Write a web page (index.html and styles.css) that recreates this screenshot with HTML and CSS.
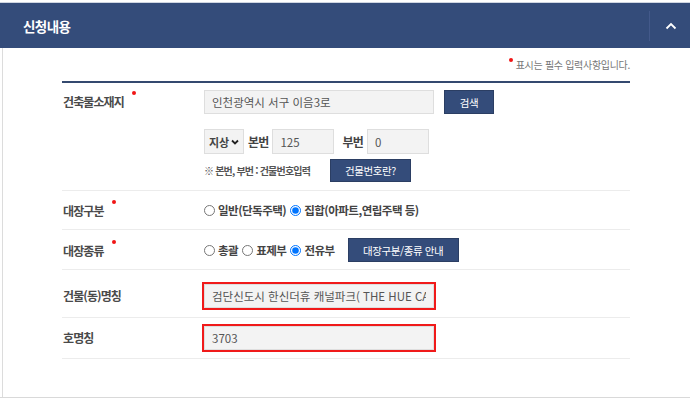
FILE: index.html
```html
<!DOCTYPE html>
<html lang="ko">
  <head>
    <meta charset="UTF-8" />
    <meta name="viewport" content="width=device-width, initial-scale=1.0" />
    <title>신청내용</title>
    <link rel="stylesheet" href="styles.css">
  </head>
  <body>
    <div class="panel">
      <div class="panel-head">
        <h2>신청내용</h2>
        <button class="toggle" aria-label="접기">
          <svg width="12" height="8" viewBox="0 0 12 8">
            <polyline points="1.5,6.5 6,2 10.5,6.5" fill="none" stroke="#fff" stroke-width="1.8" />
          </svg>
        </button>
      </div>
      <div class="panel-body">
        <p class="req-note"><span class="dot"></span> 표시는 필수 입력사항입니다.</p>
        <div class="form-table">
          <div class="row row-addr">
            <div class="th">건축물소재지<span class="dot"></span></div>
            <div class="td">
              <div class="line">
                <input type="text" class="inp inp-wide" value="인천광역시 서구 이음3로" readonly />
                <button class="btn btn-search">검색</button>
              </div>
              <div class="line line-num">
                <span class="sel-wrap">
                  <select class="sel">
                    <option>지상</option>
                    <option>지하</option>
                  </select>
                  <svg class="sel-arrow" width="8" height="6" viewBox="0 0 8 6">
                    <polyline points="1,1.5 4,4.5 7,1.5" fill="none" stroke="#222" stroke-width="1.8" />
                  </svg>
                </span>
                <label class="lbl">본번</label>
                <input type="text" class="inp inp-num" value="125" />
                <label class="lbl lbl-sub">부번</label>
                <input type="text" class="inp inp-num" value="0" />
              </div>
              <div class="line line-help">
                <span class="help">※ 본번, 부번 : 건물번호입력</span>
                <button class="btn btn-help">건물번호란?</button>
              </div>
            </div>
          </div>
          <div class="row">
            <div class="th">대장구분<span class="dot"></span></div>
            <div class="td radios">
              <label><input type="radio" name="gubun" /> 일반(단독주택)</label>
              <label><input type="radio" name="gubun" checked /> 집합(아파트,연립주택 등)</label>
            </div>
          </div>
          <div class="row row-kind">
            <div class="th">대장종류<span class="dot"></span></div>
            <div class="td radios">
              <label><input type="radio" name="kind" /> 총괄</label>
              <label><input type="radio" name="kind" /> 표제부</label>
              <label><input type="radio" name="kind" checked /> 전유부</label>
              <button class="btn btn-guide">대장구분/종류 안내</button>
            </div>
          </div>
          <div class="row row-name">
            <div class="th">건물(동)명칭</div>
            <div class="td">
              <input type="text" class="inp inp-wide marked" value="검단신도시 한신더휴 캐널파크( THE HUE CANAL PARK )" />
            </div>
          </div>
          <div class="row">
            <div class="th">호명칭</div>
            <div class="td">
              <input type="text" class="inp inp-wide marked" value="3703" />
            </div>
          </div>
        </div>
      </div>
    </div>
  </body>
</html>
```

FILE: styles.css
```css
* {
  box-sizing: border-box;
}

body {
  margin: 0;
  padding-top: 2px;
  background: #fff;
  font-family: "Noto Sans CJK KR", "Noto Sans", sans-serif;
  color: #333;
}

.panel {
  height: 396px;
  border-bottom: 1px solid #d9d9d9;
}

.panel-head {
  display: flex;
  align-items: center;
  justify-content: space-between;
  height: 46px;
  border-top: 1px solid #cfd6e2;
  background-color: #344c7a;

  h2 {
    margin: 0 0 0 23px;
    font-size: 13.5px;
    font-weight: bold;
    letter-spacing: -0.6px;
    color: #fff;
  }
  .toggle {
    display: flex;
    align-items: center;
    justify-content: center;
    width: 41px;
    height: 30px;
    padding: 0;
    border: 0;
    border-left: 1px solid #43598a;
    background: transparent;
    padding-left: 2px;
  }
}

.panel-body {
  height: 349px;
  margin-left: 2px;
  border-left: 1px solid #dcdcdc;
  padding: 8px 60px 0 59px;
}

.dot {
  display: inline-block;
  width: 4px;
  height: 4px;
  border-radius: 50%;
  background: #f01515;
}

.req-note {
  margin: 0 0 7px;
  text-align: right;
  font-size: 10px;
  line-height: 18px;
  color: #777;
  letter-spacing: -0.3px;

  .dot {
    vertical-align: 7px;
  }
}

.form-table {
  border-top: 2px solid #34496f;
}

.row {
  display: flex;
  align-items: center;
  padding: 8px 0;
  border-bottom: 1px solid #ececec;

  .th {
    width: 142px;
    flex: none;
    padding-left: 1px;
    font-size: 12px;
    line-height: 18px;
    font-weight: bold;
    letter-spacing: -0.9px;
    color: #4a4a4a;

    .dot {
      margin-left: 8px;
      vertical-align: 12px;
    }
  }
  .td {
    flex: 1;
    display: flex;
    align-items: center;
  }
}

.row-addr {
  align-items: flex-start;
  padding-top: 7px;

  .th {
    line-height: 24px;
  }
  .td {
    flex-direction: column;
    align-items: flex-start;
  }
}

.row-kind {
  padding-bottom: 7px;
}

.row-name {
  padding: 14px 0 9px;
}

.line {
  display: flex;
  align-items: center;
}

.line-num {
  margin-top: 15px;
}

.line-help {
  margin-top: 5px;
}

.inp {
  height: 24px;
  padding: 0 7px;
  border: 1px solid #dedede;
  background: #f3f3f3;
  font-family: inherit;
  font-size: 11.5px;
  color: #555;
  outline: none;
}

.inp-wide {
  width: 230px;
}

.inp-num {
  width: 62px;
  height: 25px;
}

.marked {
  outline: 2px solid #f01a1a;
  outline-offset: 0;
}

.sel-wrap {
  position: relative;
  display: inline-flex;
}

.sel {
  width: 40px;
  height: 25px;
  padding: 0 0 0 4px;
  border: 1px solid #dedede;
  border-radius: 0;
  background: #f3f3f3;
  font-family: inherit;
  font-size: 11px;
  font-weight: bold;
  color: #444;
  appearance: none;
}

.sel-arrow {
  position: absolute;
  right: 5px;
  top: 10px;
  pointer-events: none;
}

.lbl {
  margin: 0 4px 0 4px;
  font-size: 12px;
  font-weight: bold;
  letter-spacing: -0.8px;
  color: #444;
}

.lbl-sub {
  margin-left: 8px;
}

.help {
  width: 126px;
  font-size: 10px;
  font-weight: bold;
  letter-spacing: -0.8px;
  color: #555;
}

.btn {
  height: 24px;
  padding: 0;
  border: 1px solid #2b3e63;
  background-color: #344c7a;
  font-family: inherit;
  font-size: 10.5px;
  letter-spacing: -0.4px;
  color: #fff;
}

.btn-search {
  width: 50px;
  margin-left: 10px;
}

.btn-help {
  width: 81px;
  height: 23px;
}

.btn-guide {
  width: 111px;
  margin-left: 9px;
}

.radios {
  min-height: 22px;
  font-size: 11.5px;
  font-weight: bold;
  letter-spacing: -0.5px;
  color: #444;

  label {
    display: flex;
    align-items: center;
    margin-right: 4px;
  }
  input {
    width: 11px;
    height: 11px;
    margin: 0 3px 0 0;
  }
}
```
